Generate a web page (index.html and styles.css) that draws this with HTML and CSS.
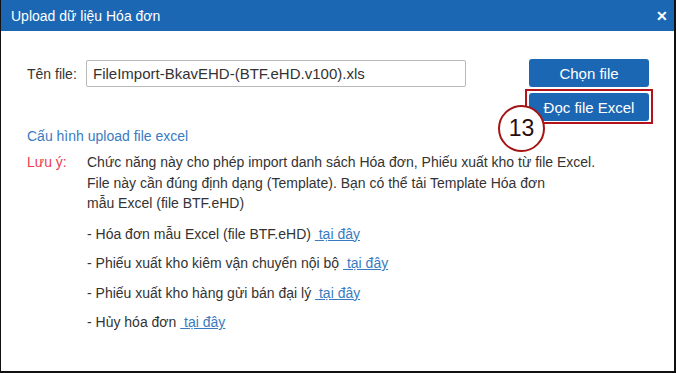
FILE: index.html
```html
<!DOCTYPE html>
<html lang="vi">
<head>
    <meta charset="UTF-8">
    <title>Upload dữ liệu Hóa đơn</title>
    <link rel="stylesheet" href="styles.css">
</head>
<body>

<div class="dialog">
    <div class="dialog-header">
        <span class="dialog-title">Upload dữ liệu Hóa đơn</span>
        <span class="dialog-close">&#10005;</span>
    </div>

    <div class="dialog-body">
        <div class="file-row">
            <label class="file-label">Tên file:</label>
            <input type="text" class="file-input" value="FileImport-BkavEHD-(BTF.eHD.v100).xls">
            <div class="button-col">
                <button class="btn">Chọn file</button>
                <div class="btn-marked">
                    <button class="btn">Đọc file Excel</button>
                    <span class="step-badge">13</span>
                </div>
            </div>
        </div>

        <a class="config-link">Cấu hình upload file excel</a>

        <div class="note">
            <span class="note-label">Lưu ý:</span>
            <div class="note-text">
                <p class="note-intro">Chức năng này cho phép import danh sách Hóa đơn, Phiếu xuất kho từ file Excel.<br>
                File này cần đúng định dạng (Template). Bạn có thể tải Template Hóa đơn<br>
                mẫu Excel (file BTF.eHD)</p>
                <p class="note-item">- Hóa đơn mẫu Excel (file BTF.eHD) <a class="here">&nbsp;tại đây</a></p>
                <p class="note-item">- Phiếu xuất kho kiêm vận chuyển nội bộ <a class="here">&nbsp;tại đây</a></p>
                <p class="note-item">- Phiếu xuất kho hàng gửi bán đại lý <a class="here">&nbsp;tại đây</a></p>
                <p class="note-item">- Hủy hóa đơn <a class="here">&nbsp;tại đây</a></p>
            </div>
        </div>
    </div>
</div>

</body>
</html>
```

FILE: styles.css
```css
html, body {
    margin: 0;
    padding: 0;
    height: 100%;
}
body {
    font-family: "Liberation Sans", Arial, sans-serif;
    font-size: 14px;
    color: #333;
    background: #fff;
}
.dialog {
    height: 100%;
    box-sizing: border-box;
    border-left: 1px solid #111;
    border-right: 2px solid #111;
    border-bottom: 2px solid #111;
}
.dialog-header {
    height: 31px;
    background-color: #1b67b3;
    color: #fff;
    display: flex;
    align-items: center;
    justify-content: space-between;
    padding: 0 6px 0 10px;
}
.dialog-title {
    font-size: 14px;
}
.dialog-close {
    font-size: 14px;
    font-weight: bold;
}
.dialog-body {
    padding: 28px 25px 0 26px;
}
.file-row {
    display: flex;
    align-items: flex-start;
}
.file-label {
    font-size: 14px;
    width: 59px;
    line-height: 28px;
    margin-top: 1px;
}
.file-input {
    width: 380px;
    height: 27px;
    box-sizing: border-box;
    margin-top: 1px;
    border: 1px solid #b9b9b9;
    border-radius: 2px;
    padding: 0 6px;
    font-family: inherit;
    font-size: 15px;
    color: #333;
}
.button-col {
    margin-left: auto;
    display: flex;
    flex-direction: column;
    gap: 6px;
}
.btn {
    display: block;
    width: 120px;
    height: 28px;
    background-color: #1b67b3;
    color: #fff;
    border: none;
    border-radius: 3px;
    font-family: inherit;
    font-size: 15px;
    padding: 0;
}
.btn-marked {
    position: relative;
}
/* red highlight frame round the button */
.btn-marked::before {
    content: "";
    position: absolute;
    left: -4px;
    right: -4px;
    top: -4px;
    bottom: -3px;
    border: 2px solid #b3121a;
}
.step-badge {
    position: absolute;
    left: -31px;
    top: 12px;
    width: 43px;
    height: 43px;
    border: 2px solid #a31414;
    border-radius: 50%;
    background: #fff;
    color: #2a0c0c;
    font-size: 23px;
    display: flex;
    align-items: center;
    justify-content: center;
}
.config-link {
    display: block;
    margin-top: 7px;
    color: #3a7bbf;
    font-size: 14px;
}
.note {
    display: flex;
    margin-top: 8px;
}
.note-label {
    width: 60px;
    color: #ee3b52;
    line-height: 20px;
}
.note-text p {
    margin: 0;
    line-height: 20.5px;
}
.note-intro {
    margin-bottom: 10px !important;
}
.note-item {
    margin-bottom: 9px !important;
}
.here {
    color: #3a7bbf;
    text-decoration: underline;
}
```
